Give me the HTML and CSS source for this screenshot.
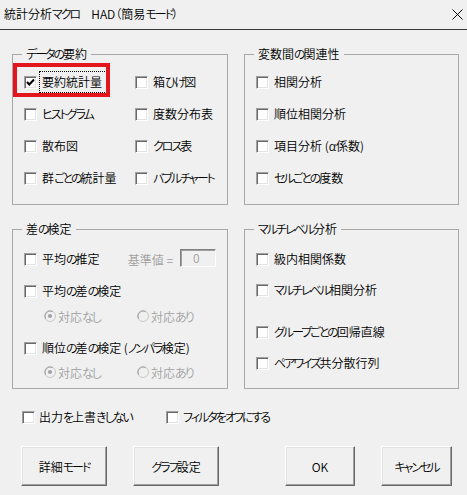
FILE: index.html
```html
<!DOCTYPE html>
<html lang="ja">
<head>
<meta charset="utf-8">
<title>統計分析マクロ HAD（簡易モード）</title>
<link rel="stylesheet" href="styles.css">
</head>
<body>
<div class="window">
  <div class="titlebar">
    <span class="title">統計分析<span class="k">マクロ</span>　HAD（簡易<span class="k">モード</span>）</span>
    <svg class="close" width="11" height="11" viewBox="0 0 11 11"><path d="M0.5 0.5 L10.5 10.5 M10.5 0.5 L0.5 10.5" stroke="#000" stroke-width="1" fill="none"/></svg>
  </div>
  <div class="client">
    <div class="groups">
      <fieldset class="group row1">
        <legend><span class="k">データの</span>要約</legend>
        <div class="grid2">
          <label class="chk sel">
            <span class="box"><svg width="11" height="11" viewBox="0 0 11 11"><path d="M2 5 L4.3 7.5 L9 2.5" stroke="#000" stroke-width="2" fill="none"/></svg></span>
            <span class="txt focus">要約統計量</span>
            <span class="redmark"></span>
          </label>
          <label class="chk"><span class="box"></span><span class="txt">箱<span class="k">ひげ</span>図</span></label>
          <label class="chk"><span class="box"></span><span class="txt"><span class="k">ヒストグラム</span></span></label>
          <label class="chk"><span class="box"></span><span class="txt">度数分布表</span></label>
          <label class="chk"><span class="box"></span><span class="txt">散布図</span></label>
          <label class="chk"><span class="box"></span><span class="txt"><span class="k">クロス</span>表</span></label>
          <label class="chk"><span class="box"></span><span class="txt">群<span class="k">ごとの</span>統計量</span></label>
          <label class="chk"><span class="box"></span><span class="txt"><span class="k">バブルチャート</span></span></label>
        </div>
      </fieldset>
      <fieldset class="group row1">
        <legend>変数間<span class="k">の</span>関連性</legend>
        <div class="list1">
          <label class="chk"><span class="box"></span><span class="txt">相関分析</span></label>
          <label class="chk"><span class="box"></span><span class="txt">順位相関分析</span></label>
          <label class="chk"><span class="box"></span><span class="txt">項目分析 (α係数)</span></label>
          <label class="chk"><span class="box"></span><span class="txt"><span class="k">セルごとの</span>度数</span></label>
        </div>
      </fieldset>
      <fieldset class="group row2">
        <legend>差<span class="k">の</span>検定</legend>
        <div class="list2">
          <div class="line">
            <label class="chk w104"><span class="box"></span><span class="txt">平均<span class="k">の</span>推定</span></label>
            <span class="dis">基準値 =</span>
            <span class="textbox">0</span>
          </div>
          <label class="chk m12"><span class="box"></span><span class="txt">平均<span class="k">の</span>差<span class="k">の</span>検定</span></label>
          <div class="radios m5">
            <span class="radio w93"><svg width="12" height="12" viewBox="0 0 12 12"><circle cx="6" cy="6" r="5.5" fill="#f0f0f0" stroke="#c8c8c8"/><path d="M1.7 8.5 A5 5 0 0 1 8.5 1.7" stroke="#a0a0a0" fill="none"/><circle cx="6" cy="6" r="2" fill="#a0a0a0"/></svg><span class="dis">対応<span class="k">なし</span></span></span>
            <span class="radio"><svg width="12" height="12" viewBox="0 0 12 12"><circle cx="6" cy="6" r="5.5" fill="#f0f0f0" stroke="#c8c8c8"/><path d="M1.7 8.5 A5 5 0 0 1 8.5 1.7" stroke="#a0a0a0" fill="none"/></svg><span class="dis">対応<span class="k">あり</span></span></span>
          </div>
          <label class="chk m12"><span class="box"></span><span class="txt">順位<span class="k">の</span>差<span class="k">の</span>検定 (<span class="k">ノンパラ</span>検定)</span></label>
          <div class="radios m4">
            <span class="radio w93"><svg width="12" height="12" viewBox="0 0 12 12"><circle cx="6" cy="6" r="5.5" fill="#f0f0f0" stroke="#c8c8c8"/><path d="M1.7 8.5 A5 5 0 0 1 8.5 1.7" stroke="#a0a0a0" fill="none"/><circle cx="6" cy="6" r="2" fill="#a0a0a0"/></svg><span class="dis">対応<span class="k">なし</span></span></span>
            <span class="radio"><svg width="12" height="12" viewBox="0 0 12 12"><circle cx="6" cy="6" r="5.5" fill="#f0f0f0" stroke="#c8c8c8"/><path d="M1.7 8.5 A5 5 0 0 1 8.5 1.7" stroke="#a0a0a0" fill="none"/></svg><span class="dis">対応<span class="k">あり</span></span></span>
          </div>
        </div>
      </fieldset>
      <fieldset class="group row2">
        <legend><span class="k">マルチレベル</span>分析</legend>
        <div class="list2">
          <label class="chk"><span class="box"></span><span class="txt">級内相関係数</span></label>
          <label class="chk m11"><span class="box"></span><span class="txt"><span class="k">マルチレベル</span>相関分析</span></label>
          <label class="chk m22"><span class="box"></span><span class="txt"><span class="k">グループごとの</span>回帰直線</span></label>
          <label class="chk m11"><span class="box"></span><span class="txt"><span class="k">ペアワイズ</span>共分散行列</span></label>
        </div>
      </fieldset>
    </div>
    <div class="options">
      <label class="chk w144"><span class="box"></span><span class="txt">出力<span class="k">を</span>上書<span class="k">きしない</span></span></label>
      <label class="chk"><span class="box"></span><span class="txt"><span class="k">フィルタをオフにする</span></span></label>
    </div>
    <div class="buttons">
      <button class="btn wide">詳細<span class="k">モード</span></button>
      <button class="btn wide gap26"><span class="k">グラフ</span>設定</button>
      <button class="btn ok gap66">OK</button>
      <button class="btn cancel gap26"><span class="k">キャンセル</span></button>
    </div>
  </div>
</div>
</body>
</html>
```

FILE: styles.css
```css
* { box-sizing: border-box; }
html, body { margin: 0; padding: 0; background: #f0f0f0; }
body {
  font-family: "Noto Sans CJK JP", "Noto Sans", sans-serif;
  font-size: 12px;
  color: #000;
  font-feature-settings: "palt";
  font-weight: 350;
}
.k { letter-spacing: -2px; }
.window { width: 467px; height: 495px; background: #f0f0f0; }
.titlebar {
  height: 30px;
  border-bottom: 1px solid #3a3a3a;
  display: flex;
  align-items: center;
  justify-content: space-between;
  padding: 0 4px 1px 4px;
}
.title { font-size: 12px; line-height: 16px; }
.close { margin-right: 0; }
.client { padding-top: 16px; }
.groups {
  display: grid;
  grid-template-columns: 216px 215px;
  grid-template-rows: 159px 168px;
  column-gap: 16px;
  row-gap: 16px;
  margin-left: 12px;
}
.group {
  margin: 0;
  padding: 0 11px;
  border: 1px solid #a8a8a8;
  min-width: 0;
}
.group legend {
  margin-left: -2px;
  padding: 0 4px;
  line-height: 16px;
  font-size: 12px;
}
.grid2 {
  display: grid;
  grid-template-columns: 111px auto;
  grid-auto-rows: 20px;
  row-gap: 12px;
  padding-top: 10px;
}
.list1 {
  display: flex;
  flex-direction: column;
  gap: 12px;
  padding-top: 10px;
}
.list2 {
  display: flex;
  flex-direction: column;
  padding-top: 12px;
}
.chk, .line, .radios {
  height: 20px;
  display: flex;
  align-items: center;
  white-space: nowrap;
}
.chk { position: relative; }
.box {
  width: 13px;
  height: 13px;
  flex: none;
  background: #fff;
  border: 1px solid;
  border-color: #a0a0a0 #fff #fff #a0a0a0;
  box-shadow: inset 1px 1px 0 #696969, inset -1px -1px 0 #e3e3e3;
  display: flex;
  align-items: center;
  justify-content: center;
  margin-right: 5px;
}
.box svg { display: block; }
.txt { line-height: 16px; }
.focus { outline: 1px dotted #000; outline-offset: 2px; padding: 0 2px 0 0; }
.redmark {
  position: absolute;
  left: -11px;
  top: -9px;
  width: 97px;
  height: 34px;
  border: 4px solid #e3161d;
  pointer-events: none;
}
.w104 { width: 104px; }
.w144 { width: 144px; }
.w93 { width: 93px; }
.m4 { margin-top: 4px; }
.m5 { margin-top: 5px; }
.m11 { margin-top: 11px; }
.m12 { margin-top: 12px; }
.m22 { margin-top: 22px; }
.dis { color: #a0a0a0; }
.textbox {
  margin-left: 7px;
  width: 36px;
  height: 18px;
  margin-top: -3px;
  border: 1px solid;
  border-color: #808080 #fff #fff #808080;
  box-shadow: inset 1px 1px 0 #a0a0a0;
  color: #a0a0a0;
  font-size: 12px;
  line-height: 16px;
  padding-left: 12px;
}
.radios { padding-left: 20px; }
.radio { display: flex; align-items: center; }
.radio svg { margin-right: 2px; flex: none; }
.options {
  display: flex;
  margin-top: 18px;
  padding-left: 22px;
}
.options .box { margin-right: 4px; }
.buttons {
  display: flex;
  margin-top: 19px;
  padding-left: 21px;
}
.btn {
  height: 40px;
  background: #f0f0f0;
  border: 1px solid;
  border-color: #fff #696969 #696969 #fff;
  box-shadow: inset -1px -1px 0 #a0a0a0, inset 1px 1px 0 #e3e3e3;
  font-family: "Noto Sans CJK JP", "Noto Sans", sans-serif;
  font-feature-settings: "palt";
  font-weight: 350;
  font-size: 12px;
  color: #000;
  padding: 0;
}
.wide { width: 86px; }
.ok { width: 70px; }
.cancel { width: 71px; }
.gap26 { margin-left: 26px; }
.gap66 { margin-left: 66px; }
```
